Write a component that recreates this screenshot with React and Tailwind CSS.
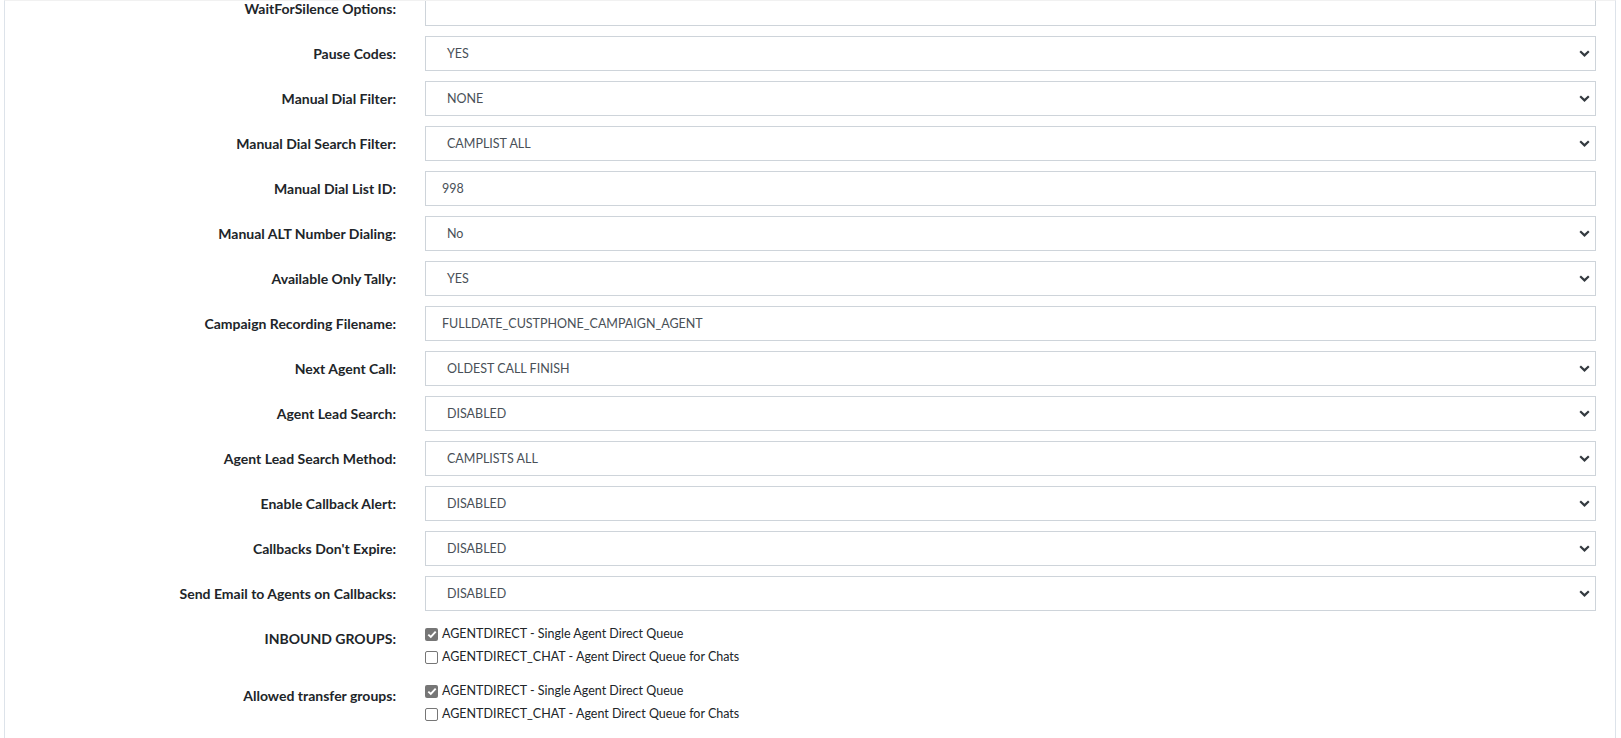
const rows = [
  {label: 'WaitForSilence Options:', value: '', type: 'input'},
  {label: 'Pause Codes:', value: 'YES', type: 'select'},
  {label: 'Manual Dial Filter:', value: 'NONE', type: 'select'},
  {label: 'Manual Dial Search Filter:', value: 'CAMPLIST ALL', type: 'select'},
  {label: 'Manual Dial List ID:', value: '998', type: 'input'},
  {label: 'Manual ALT Number Dialing:', value: 'No', type: 'select'},
  {label: 'Available Only Tally:', value: 'YES', type: 'select'},
  {label: 'Campaign Recording Filename:', value: 'FULLDATE_CUSTPHONE_CAMPAIGN_AGENT', type: 'input'},
  {label: 'Next Agent Call:', value: 'OLDEST CALL FINISH', type: 'select'},
  {label: 'Agent Lead Search:', value: 'DISABLED', type: 'select'},
  {label: 'Agent Lead Search Method:', value: 'CAMPLISTS ALL', type: 'select'},
  {label: 'Enable Callback Alert:', value: 'DISABLED', type: 'select'},
  {label: "Callbacks Don't Expire:", value: 'DISABLED', type: 'select'},
  {label: 'Send Email to Agents on Callbacks:', value: 'DISABLED', type: 'select'},
];

const groups = [
  {
    label: 'INBOUND GROUPS:',
    items: [
      {text: 'AGENTDIRECT - Single Agent Direct Queue', checked: true},
      {text: 'AGENTDIRECT_CHAT - Agent Direct Queue for Chats', checked: false},
    ],
  },
  {
    label: 'Allowed transfer groups:',
    items: [
      {text: 'AGENTDIRECT - Single Agent Direct Queue', checked: true},
      {text: 'AGENTDIRECT_CHAT - Agent Direct Queue for Chats', checked: false},
    ],
  },
];

function Chevron() {
  return (
    <svg width="11" height="7" viewBox="0 0 11 7" className="shrink-0">
      <path d="M1.2 1.3 L5.5 5.4 L9.8 1.3" fill="none" stroke="#343a40" strokeWidth="2.2"/>
    </svg>
  );
}

function Field({row}) {
  return (
    <div className="flex items-center mb-[10px]">
      <div className="w-[391px] text-right text-[14px] font-bold text-[#212529] leading-5">
        {row.label}
      </div>
      <div className="ml-[29px] w-[1171px] h-[35px] border border-[#ced4da] bg-white flex items-center">
        {row.type === 'select' ? (
          <>
            <span className="flex-1 pl-[21px] pt-[2px] text-[12.5px] text-[#495057]">{row.value}</span>
            <span className="pr-[5px]"><Chevron/></span>
          </>
        ) : (
          <span className="pl-[16px] pt-[2px] text-[12.5px] text-[#495057]">{row.value}</span>
        )}
      </div>
    </div>
  );
}

function Box({checked}) {
  if (checked) {
    return (
      <span className="w-[13px] h-[13px] rounded-[2px] bg-[#767676] flex items-center justify-center shrink-0">
        <svg width="10" height="9" viewBox="0 0 10 9">
          <path d="M1.3 4.6 L3.8 7 L8.7 1.6" fill="none" stroke="#fff" strokeWidth="1.9"/>
        </svg>
      </span>
    );
  }
  return <span className="w-[13px] h-[13px] rounded-[2px] border border-[#767676] bg-white shrink-0"/>;
}

function Group({group}) {
  return (
    <div className="flex mb-[11px]">
      <div className="w-[391px] pt-[6px] text-right text-[14px] font-bold text-[#212529] leading-5">
        {group.label}
      </div>
      <div className="ml-[29px]">
        {group.items.map((it, i) => (
          <div key={i} className="flex items-center h-[23px]">
            <Box checked={it.checked}/>
            <span className="ml-[4px] text-[12.5px] text-[#212529]">{it.text}</span>
          </div>
        ))}
      </div>
    </div>
  );
}

export default function App() {
  return (
    <div className="h-[738px] bg-white overflow-hidden" style={{fontFamily: 'Lato, "Noto Sans", sans-serif'}}>
      <div className="ml-[4px] w-[1612px] h-[738px] border-l border-r border-t border-l-[#dde3ea] border-r-[#dde3ea] border-t-[#f1f1f1] overflow-hidden">
        <div className="-mt-[10px]">
          {rows.map((r, i) => <Field key={i} row={r}/>)}
          <div className="pt-[2px]">
            {groups.map((g, i) => <Group key={i} group={g}/>)}
          </div>
        </div>
      </div>
    </div>
  );
}
